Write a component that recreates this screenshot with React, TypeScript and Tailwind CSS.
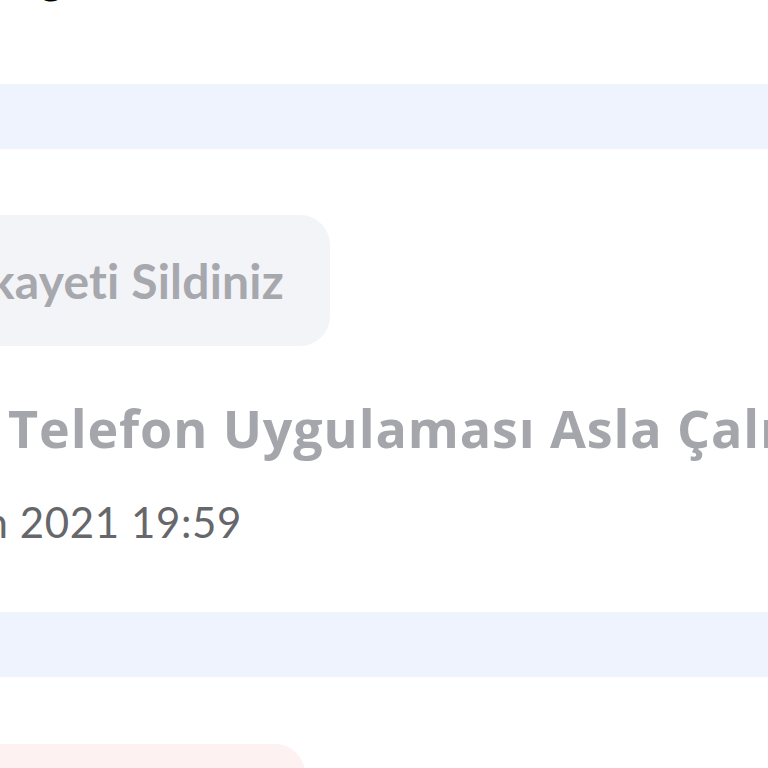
export default function App() {
  const font = { fontFamily: '"Lato", "Noto Sans", sans-serif' };

  return (
    <div className="w-[768px] h-[768px] overflow-hidden bg-white" style={font}>
      {/* clipped heading above */}
      <div className="h-[84px] overflow-hidden">
        <div className="h-[5px] overflow-hidden">
          <p className="-mt-[47px] pl-[40px] text-[44px] leading-[48px] font-bold text-black whitespace-nowrap">
            g
          </p>
        </div>
      </div>

      {/* divider band */}
      <div className="h-[65px] bg-[#eff3fd]" />

      {/* complaint card */}
      <div className="pt-[66px]">
        <div className="w-[330px] h-[131px] bg-[#f3f4f8] rounded-r-[30px] flex items-center justify-end pr-[46px] overflow-hidden">
          <span className="text-[48px] font-bold text-[#a7a8ad] whitespace-nowrap tracking-[0.2px]">
            Şikayeti Sildiniz
          </span>
        </div>

        <p
          className="mt-[46px] pl-[8px] text-[52px] leading-[72px] font-bold text-[#a5a6ab] whitespace-nowrap tracking-[0.9px]"
          style={{ fontFamily: '"Open Sans", "Lato", sans-serif' }}
        >
          Telefon Uygulaması Asla Çalışmıyor
        </p>

        <div className="mt-[30px] w-[242px] flex justify-end overflow-hidden">
          <span className="text-[42px] leading-[56px] text-[#66676b] whitespace-nowrap tracking-[0.6px]">
            18 Haziran 2021 19:59
          </span>
        </div>
      </div>

      {/* divider band */}
      <div className="mt-[62px] h-[65px] bg-[#eff3fd]" />

      {/* next card */}
      <div className="pt-[67px]">
        <div className="w-[305px] h-[131px] bg-[#fdf1f1] rounded-r-[30px]" />
      </div>
    </div>
  );
}
